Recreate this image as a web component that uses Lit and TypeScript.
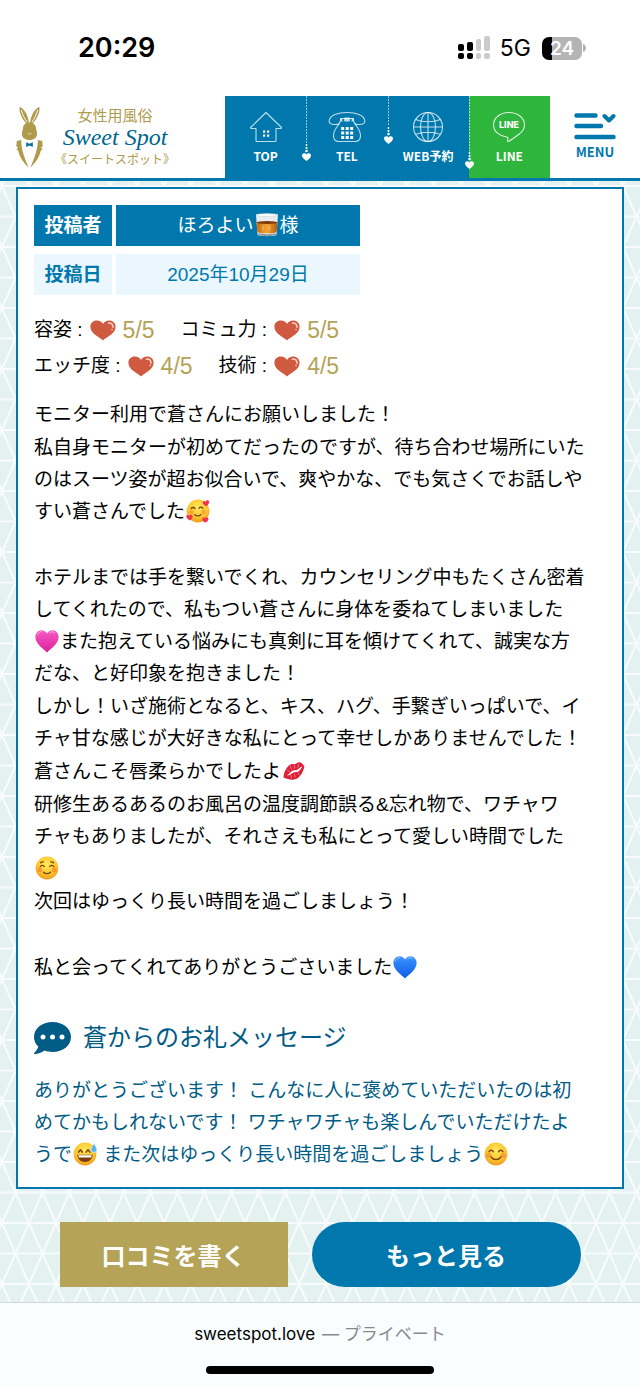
import { LitElement, html, css, svg } from "lit";
import { customElement, property } from "lit/decorators.js";

const face = svg`
  <defs>
    <radialGradient id="g" cx="50%" cy="35%" r="65%">
      <stop offset="0" stop-color="#ffe95c" /><stop offset="0.65" stop-color="#fdc62f" /><stop offset="1" stop-color="#f09a1c" />
    </radialGradient>
  </defs>
  <circle cx="12" cy="12" r="11.4" fill="url(#g)" />`;

const heartPath = "M12 23.500C8.500 19.500 .4 15 .4 8 .4 4 3.200 1.200 6.500 1.200 9 1.200 11 2.500 12 4.600 13 2.500 15 1.200 17.500 1.200c3.300 0 6.100 2.800 6.100 6.800 0 7-8.100 11.500-11.600 15.500z";

const heart = (light: string, dark: string) => svg`
  <defs>
    <linearGradient id="h" x1="0" y1="0" x2="0" y2="1">
      <stop offset="0" stop-color=${light} /><stop offset="1" stop-color=${dark} />
    </linearGradient>
  </defs>
  <path d=${heartPath} fill="url(#h)" />
  <path d="M2.500 6C3.200 3.500 5 2.600 6.800 2.600M14.500 3.800c1.500-1.300 3.500-1.400 5-.4" fill="none" stroke="#fff" stroke-opacity=".45" stroke-width="1" stroke-linecap="round" />`;

const EMOJI: Record<string, { label: string; art: unknown }> = {
  adore: {
    label: "🥰",
    art: svg`${face}
      <g fill="none" stroke="#7a4310" stroke-width="1.300" stroke-linecap="round">
        <path d="M5.200 9.600c.8-1.500 3-1.500 3.800 0M13 9.300c.8-1.500 3-1.500 3.800 0M8.800 15.800c1.500 1.500 4.500 1.500 6 0" />
      </g>
      <circle cx="5.500" cy="13" r="2.200" fill="#f7793c" opacity=".5" /><circle cx="17.500" cy="13" r="2.200" fill="#f7793c" opacity=".5" />
      <g fill="#ee3651">
        <path d="M20.500 7.200c-2.200-1-4-2.200-3.700-4 .3-1.500 2-1.600 2.800-.5.500-1.400 2.600-1.900 3.500-.6.900 1.600-.9 3.600-2.600 5.100z" />
        <path d="M4.300 21.500C2.300 20.600.1 19 .3 17.200c.3-1.600 2.200-1.600 2.900-.4.600-1.300 2.600-1.500 3.300-.2.700 1.700-.8 3.500-2.200 4.900z" />
        <path d="M19.700 23.600c-2.200-.7-3.900-2-3.500-3.900.4-1.400 2.100-1.500 2.800-.4.700-1.300 2.700-1.500 3.300-.1.600 1.600-1 3.300-2.600 4.400z" />
      </g>`,
  },
  relaxed: {
    label: "☺️",
    art: svg`${face}
      <g fill="none" stroke="#7a4310" stroke-width="1.300" stroke-linecap="round">
        <path d="M5.300 10.500c.8-1.600 3.200-1.600 4 0M14.700 10.500c.8-1.600 3.200-1.600 4 0M8.500 16.200c1.700 1.900 5.300 1.900 7 0M5.500 6.800c.8-.8 1.800-1.100 2.800-1M18.500 6.800c-.8-.8-1.800-1.100-2.800-1" />
      </g>
      <circle cx="4.800" cy="13.800" r="2.500" fill="#f4693a" opacity=".5" /><circle cx="19.200" cy="13.800" r="2.500" fill="#f4693a" opacity=".5" />`,
  },
  smile: {
    label: "😊",
    art: svg`${face}
      <g fill="none" stroke="#7a4310" stroke-width="1.400" stroke-linecap="round">
        <path d="M5 9.700c.9-2 3.500-2 4.400 0M14.600 9.700c.9-2 3.500-2 4.400 0M6.800 14.500c2.400 4.200 8 4.200 10.400 0" />
      </g>
      <circle cx="4.800" cy="13.300" r="2.500" fill="#f4693a" opacity=".45" /><circle cx="19.200" cy="13.300" r="2.500" fill="#f4693a" opacity=".45" />`,
  },
  sweat: {
    label: "😅",
    art: svg`${face}
      <g fill="none" stroke="#7a4310" stroke-width="1.400" stroke-linecap="round" stroke-linejoin="round">
        <path d="M5.500 10.300 7.500 7.700l2 2.600M13 10.300l2-2.600 2 2.600" />
      </g>
      <path d="M4.300 12.800h15.400c-.3 4.600-3.500 7.200-7.700 7.200s-7.400-2.600-7.700-7.200z" fill="#7a3d12" />
      <path d="M5.300 13.300h13.400l-.5 2.200H5.800z" fill="#fff" />
      <path d="M21 1.500c1 2 2.800 4 2.800 6a2.900 2.900 0 0 1-5.800 0c0-2 2-4 3-6z" fill="#54b4ee" stroke="#e6f6ff" stroke-width=".6" />`,
  },
  pink: { label: "🩷", art: heart("#f45cc4", "#dc1f9c") },
  blue: { label: "💙", art: heart("#3d94ff", "#0a5be8") },
  kiss: {
    label: "💋",
    art: svg`
      <path d="M1.500 18.500C1.700 13 4.500 7.500 9 5.200c1.600-.8 3 .2 4.300-.1C14.800 4.500 16.500 2.800 18.500 3.500c1.900.6 2.500 2.500 3.900 3.700-1 5.300-3.800 10.800-8.400 12.800-4 1.600-7.500.4-12.500-1.500z" fill="#dc2038" />
      <path d="M4.500 16.300c2.800-.7 4-3.800 6.500-4.800 1.700-.7 2.700.2 4.300-.8 2-1.200 3-2.800 5.200-3.200-1.400 1.900-2.500 4.200-4.600 5.200-1.500.7-3 .2-4.600 1-2.300 1.200-3.700 3-6.800 2.600z" fill="#fff" />
      <path d="M8.500 7.500l1 2.800M12.500 6.800l.2 2.500M16.500 5.500l-.6 2.800M9 16.500l.6 2.200M12.500 15.500l.7 2.500M16 13.800l1 1.800M5.500 11l1.500 1.700" stroke="#f7a6ad" stroke-width=".7" stroke-linecap="round" />`,
  },
  whisky: {
    label: "🥃",
    art: svg`
      <defs>
        <linearGradient id="w" x1="0" x2="1">
          <stop offset="0" stop-color="#c46a12" /><stop offset=".5" stop-color="#f3a431" /><stop offset="1" stop-color="#b65a0e" />
        </linearGradient>
      </defs>
      <path d="M1 1.500h22l-1.500 20c-.1 2.200-19 2.200-19 0z" fill="#e9edf0" />
      <path d="M1.500 9.500h21l-.9 9.500c-2 1.800-17.200 1.800-19.200 0z" fill="url(#w)" />
      <ellipse cx="12" cy="9.500" rx="10.500" ry="1.400" fill="#7b3a0c" />
      <ellipse cx="12" cy="2" rx="11" ry="1.400" fill="#fff" stroke="#c3cbd0" stroke-width=".5" />
      <path d="M3 20c3 1.500 15 1.500 18 0l-.3 1.800c-3 1.800-14.400 1.800-17.400 0z" fill="#8e9aa1" />
      <path d="M8 12.500v5M14.500 12.500v5" stroke="#ffd27a" stroke-width="1.500" opacity=".5" />`,
  },
};

@customElement("sweet-emoji")
class SweetEmoji extends LitElement {
  @property() name = "smile";
  static styles = css`
    :host { display: inline-block; width: 24px; height: 24px; margin: 0 1px; vertical-align: -5px; }
    svg { display: block; }
  `;
  render() {
    const e = EMOJI[this.name];
    return html`<svg width="24" height="24" viewBox="0 0 24 24" role="img" aria-label=${e.label}>${e.art}</svg>`;
  }
}

@customElement("status-bar")
class StatusBar extends LitElement {
  static styles = css`
    :host {
      display: flex; justify-content: space-between; align-items: center; box-sizing: border-box;
      height: 96px; padding: 0 54px 0 78px; background: #fff; color: #000;
      font-family: Inter, "Liberation Sans", sans-serif;
    }
    .time { font-size: 27px; font-weight: 600; line-height: 32px; }
    .right { display: flex; align-items: center; }
    .net { font-size: 23px; line-height: 28px; margin: 0 11px 0 10px; }
    .battery {
      width: 40px; height: 23px; border-radius: 7px; text-align: center; color: #fff;
      font-size: 19px; font-weight: 600; line-height: 23px;
      background: linear-gradient(to right, #000 24%, #b4b4b4 24%);
    }
    .cap { margin-left: 1px; }
  `;
  render() {
    return html`
      <div class="time">20:29</div>
      <div class="right">
        <svg width="32" height="24" viewBox="0 0 32 24" aria-label="電波">
          <g fill="#000">
            <rect y="8" width="6" height="7" rx="2" /><rect y="17" width="6" height="6" rx="2" />
            <rect x="9" y="6" width="6" height="9" rx="2" /><rect x="9" y="17" width="6" height="6" rx="2" />
          </g>
          <g fill="#cbcbcb">
            <rect x="18" y="3" width="5" height="12" rx="2" /><rect x="18" y="17" width="5" height="6" rx="2" />
            <rect x="26" y="0" width="6" height="15" rx="2" /><rect x="26" y="17" width="6" height="6" rx="2" />
          </g>
        </svg>
        <span class="net">5G</span>
        <span class="battery">24</span>
        <svg class="cap" width="3" height="8" viewBox="0 0 3 8"><path d="M0 0c4 1 4 7 0 8z" fill="#b4b4b4" /></svg>
      </div>`;
  }
}

@customElement("site-header")
class SiteHeader extends LitElement {
  static styles = css`
    :host {
      display: grid; grid-template-columns: 225px repeat(4, 1fr) 90px; height: 82px;
      background: #fff; border-bottom: 3px solid #0078ad;
      font-family: "Noto Sans CJK JP", sans-serif;
    }
    .logo { display: flex; align-items: center; padding-left: 16px; gap: 8px; text-decoration: none; color: #b09a4c; }
    .words { display: flex; flex-direction: column; align-items: center; width: 126px; white-space: nowrap; }
    .words span { line-height: 22px; }
    .kind { font-size: 15px; }
    .name { font-family: "Liberation Serif", serif; font-style: italic; font-size: 24px; color: #00658f; }
    .kana { font-size: 12px; }
    .item {
      position: relative; display: flex; flex-direction: column; align-items: center; gap: 4px;
      padding-top: 15px; background: #0078ad; color: #fff; text-decoration: none;
      font-size: 12px; font-weight: 700; line-height: 18px; white-space: nowrap;
    }
    .line { background: #2db53c; }
    .drop { position: absolute; top: 0; right: -6px; z-index: 1; }
    .menu {
      display: flex; flex-direction: column; align-items: center; gap: 3px; padding: 16px 0 0; border: 0;
      background: #fff; color: #0078ad; font: 700 13px/18px "Noto Sans CJK JP", sans-serif;
    }
    svg { display: block; }
  `;
  drop(len: number) {
    return html`<svg class="drop" width="10" height=${len + 10} viewBox="0 0 10 ${len + 10}" aria-hidden="true">
      <path d="M4.500 0V${len - 9}" stroke="#fff" stroke-opacity=".6" stroke-width="1" stroke-dasharray="2 1" />
      <g fill="#fff"><circle cx="4.500" cy=${len - 7} r=".9" /><circle cx="4.500" cy=${len - 4} r="1.100" /><circle cx="4.500" cy=${len - 1} r="1.300" />
      <path transform="translate(0 ${len + 1})" d="M4.500 8C2.500 6.300 0 4.700 0 2.400 0 0 3.300-.7 4.500 1.500 5.700-.7 9 0 9 2.400 9 4.700 6.500 6.300 4.500 8z" /></g>
    </svg>`;
  }
  render() {
    return html`
      <a class="logo" href="#">
        <svg width="28" height="62" viewBox="0 0 28 62" aria-hidden="true">
          <g fill="#b09a4c">
            <path d="M11.500 18.500C7 14.500 2.600 7 3.600 1 8.500 2.500 12.500 10 13 17.500zM15.500 18.500C20 14.500 24.400 7 23.400 1 18.500 2.500 14.500 10 14 17.500z" />
            <path d="M13.500 16.500c4.200 0 6.300 2.500 6.600 6 .1 1.800 1 3 1 5.200 0 3.800-3 6.300-7.600 6.300s-7.600-2.500-7.600-6.300c0-2.200.9-3.400 1-5.200.3-3.500 2.400-6 6.600-6z" />
            <path d="M5.200 34C5 43 9 53 12.600 61.500 7.500 57 3.500 51 2.200 44.500L.5 43.800 2 41.500.3 40.300 .8 35zM21.800 34C22 43 18 53 14.400 61.500c5.100-4.500 9.100-10.500 10.400-17l1.700-.7L25 41.500l1.700-1.200-.5-5.300z" />
          </g>
          <path d="M5.300 4c1.200 4.700 3.200 8.700 5.700 12M21.700 4c-1.200 4.700-3.200 8.700-5.700 12" stroke="#fff" stroke-width="1" fill="none" />
          <path d="M11.500 27.500q2 1.300 4 0" stroke="#efe6c4" stroke-width=".8" fill="none" />
          <path d="M10.200 36.300 13.500 37.800l3.300-1.500v4.700L13.500 39.500l-3.300 1.500z" fill="#00709f" />
        </svg>
        <span class="words">
          <span class="kind">女性用風俗</span><span class="name">Sweet Spot</span><span class="kana">《スイートスポット》</span>
        </span>
      </a>
      <a class="item" href="#top">
        <svg width="34" height="32" viewBox="0 0 34 32" fill="none" stroke="#fff" stroke-opacity=".75" stroke-width="1.100" stroke-linejoin="round">
          <path d="M17 1.500 1.500 16.500 2 17.500H7V29.500q0 1 1 1H26q1 0 1-1V17.500h5l.5-1z" />
          <g fill="#fff" stroke="none"><rect x="14" y="19.500" width="2.200" height="2.200" /><rect x="18" y="19.500" width="2.200" height="2.200" /><rect x="14" y="23.500" width="2.200" height="2.200" /><rect x="18" y="23.500" width="2.200" height="2.200" /></g>
        </svg>TOP${this.drop(56)}
      </a>
      <a class="item" href="#tel">
        <svg width="38" height="32" viewBox="0 0 38 32" fill="none" stroke="#fff" stroke-opacity=".75" stroke-width="1.100" stroke-linejoin="round">
          <path d="M12.500 7.500C13 11.500 11 14 6.500 13.500 2.500 13.500.8 12 1.200 9.500 2 4 10 1.500 19 1.500S36 4 36.800 9.500c.4 2.500-1.300 4-5.300 4-4.500.5-6.500-2-6-6zM12 11c-1 3.500-6.500 7-6.500 13.500 0 4.500 1.500 6 5 6h17c3.500 0 5-1.500 5-6C32.500 18 27 14.500 26 11" />
          <path d="M13.500 7.500v3M24.500 7.500v3M17 7.500h4v2h-4z" stroke-width="1.800" />
          <g fill="#fff" stroke="none">
            ${[16, 20.5, 25].map((y) => [13.2, 17.7, 22.2].map((x) => svg`<rect x=${x} y=${y} width="3" height="3" />`))}
          </g>
        </svg>TEL${this.drop(39)}
      </a>
      <a class="item" href="#reserve">
        <svg width="32" height="32" viewBox="0 0 32 32" fill="none" stroke="#fff" stroke-opacity=".75" stroke-width="1.100">
          <circle cx="16" cy="16" r="14.500" /><ellipse cx="16" cy="16" rx="7.500" ry="14.500" />
          <path d="M16 1.500v29M1.500 16h29M3.500 8.500c7 3 18 3 25 0M3.500 23.500c7-3 18-3 25 0" />
        </svg>WEB予約${this.drop(64)}
      </a>
      <a class="item line" href="#line">
        <svg width="34" height="32" viewBox="0 0 34 32" fill="none">
          <path d="M17 1.500c8.500 0 15.500 5.200 15.500 12.500 0 4-2.500 7-5.500 9.300-3.500 2.700-7 5-10 6.900-1 .6-1.600.2-1.400-.6.500-1.500.8-3.300-.8-3.600C7.500 25 1.500 20.500 1.500 14 1.500 6.700 8.500 1.500 17 1.500z" stroke="#fff" stroke-opacity=".85" stroke-width="1.100" />
          <text x="17" y="17" text-anchor="middle" fill="#fff" font-family="Inter, sans-serif" font-size="9" font-weight="800">LINE</text>
        </svg>LINE
      </a>
      <button class="menu" type="button">
        <svg width="42" height="28" viewBox="0 0 42 28" fill="none" stroke="#0078ad" stroke-linecap="round" stroke-linejoin="round">
          <path d="M2.500 3.500h19M2.500 14h24.500M2.500 25h37" stroke-width="4.500" /><path d="M30.500 4 35 8.500l4.500-4.500" stroke-width="4" />
        </svg>MENU
      </button>`;
  }
}

@customElement("review-card")
class ReviewCard extends LitElement {
  static styles = css`
    :host {
      display: block; border: 2px solid #0078ad; background: #fff; padding: 8px 16px 16px; color: #000;
      font-family: "Liberation Sans", "Noto Sans CJK JP", sans-serif; font-size: 19px; line-height: 32px;
    }
    table { border-spacing: 4px 8px; margin-left: -4px; }
    th, td { height: 41px; padding: 0; text-align: center; line-height: 28px; }
    th { width: 78px; font-weight: 700; }
    td { width: 244px; }
    .who { background: #0078ad; color: #fff; }
    .when { background: #ebf7ff; color: #0078ad; }
    .scores { display: grid; margin-top: 9px; }
    .row { display: flex; gap: 26px; height: 36px; }
    .score { display: flex; align-items: center; }
    .score svg { margin: 0 7px; }
    .num { color: #b5a357; font-size: 23px; }
    .text { display: grid; gap: 1px; max-width: 552px; margin-top: 15px; line-break: strict; }
    p { margin: 0; }
    .spaced { margin-top: 33px; }
    h2 {
      display: flex; align-items: center; gap: 12px; height: 34px; margin: 37px 0 20px;
      font-size: 24px; font-weight: 400; color: #005b85;
    }
    .thanks { max-width: 552px; color: #005b85; line-break: strict; }
  `;
  score(label: string, n: number) {
    return html`<div class="score"><span>${label} :</span>
      <svg width="26" height="21" viewBox="0 0 26 21" aria-hidden="true">
        <path d="M13 20.500C9 16.500.4 14 .4 6.800.4 3 3.200.6 6.800.6 9.600.6 12 1.800 13 4 14 1.800 16.400.6 19.200.6c3.600 0 6.400 2.400 6.400 6.200C25.600 14 17 16.500 13 20.500z" fill="#d05a40" />
        <path d="M18.500 3.200c2.500-.6 4.700 1.200 4.500 4" fill="none" stroke="#f6d5cc" stroke-width="1.500" stroke-linecap="round" /><circle cx="22" cy="9.500" r=".8" fill="#f6d5cc" />
      </svg><span class="num">${n}/5</span></div>`;
  }
  render() {
    const e = (n: string) => html`<sweet-emoji name=${n}></sweet-emoji>`;
    return html`
      <table>
        <tr class="who"><th scope="row">投稿者</th><td>ほろよい${e("whisky")}様</td></tr>
        <tr class="when"><th scope="row">投稿日</th><td>2025年10月29日</td></tr>
      </table>
      <div class="scores">
        <div class="row">${this.score("容姿", 5)}${this.score("コミュ力", 5)}</div>
        <div class="row">${this.score("エッチ度", 4)}${this.score("技術", 4)}</div>
      </div>
      <div class="text" lang="ja">
        <p>モニター利用で蒼さんにお願いしました！</p>
        <p>私自身モニターが初めてだったのですが、待ち合わせ場所にいたのはスーツ姿が超お似合いで、爽やかな、でも気さくでお話しやすい蒼さんでした${e("adore")}</p>
        <p class="spaced">ホテルまでは手を繋いでくれ、カウンセリング中もたくさん密着してくれたので、私もつい蒼さんに身体を委ねてしまいました${e("pink")}また抱えている悩みにも真剣に耳を傾けてくれて、誠実な方だな、と好印象を抱きました！</p>
        <p>しかし！いざ施術となると、キス、ハグ、手繋ぎいっぱいで、イチャ甘な感じが大好きな私にとって幸せしかありませんでした！</p>
        <p>蒼さんこそ唇柔らかでしたよ${e("kiss")}</p>
        <p>研修生あるあるのお風呂の温度調節誤る&amp;忘れ物で、ワチャワチャもありましたが、それさえも私にとって愛しい時間でした${e("relaxed")}</p>
        <p>次回はゆっくり長い時間を過ごしましょう！</p>
        <p class="spaced">私と会ってくれてありがとうごさいました${e("blue")}</p>
      </div>
      <h2>
        <svg width="37" height="32" viewBox="0 0 37 32" aria-hidden="true">
          <path d="M18.500 0C29 0 37 6.500 37 15s-8 15-18.500 15c-3 0-5.500-.4-8-1.400C7.500 30.800 4 32 .6 32c-.8 0-.8-.7-.2-1.200 2-2 3.500-4.500 3.900-6.300C1.500 22 0 18.700 0 15 0 6.500 8 0 18.500 0z" fill="#005b85" />
          <g fill="#fff"><circle cx="9" cy="15" r="2.500" /><circle cx="18.500" cy="15" r="2.500" /><circle cx="28" cy="15" r="2.500" /></g>
        </svg>蒼からのお礼メッセージ
      </h2>
      <p class="thanks" lang="ja">ありがとうございます！ こんなに人に褒めていただいたのは初めてかもしれないです！ ワチャワチャも楽しんでいただけたようで${e("sweat")} また次はゆっくり長い時間を過ごしましょう${e("smile")}</p>`;
  }
}

@customElement("app-root")
class AppRoot extends LitElement {
  static styles = css`
    :host { display: block; font-family: "Liberation Sans", "Noto Sans CJK JP", sans-serif; }
    main {
      padding: 6px 16px 15px;
      background: #e4f1f1 url("data:image/svg+xml,%3Csvg xmlns='http://www.w3.org/2000/svg' width='27' height='61'%3E%3Cpath d='M-1 -2.260 28 63.260M28 -2.260 -1 63.260M0 0H27M0 30.500H27M0 61H27' fill='none' stroke='%23fff' stroke-opacity='.75' stroke-width='2'/%3E%3C/svg%3E") 2px 5px;
    }
    .actions { display: flex; justify-content: center; gap: 24px; margin-top: 33px; }
    .btn {
      height: 65px; border: 0; padding: 0; color: #fff;
      font: 700 24px/36px "Noto Sans CJK JP", sans-serif;
    }
    .write { width: 228px; background: #b5a357; }
    .more { width: 269px; background: #0078ad; border-radius: 33px; }
    footer {
      display: flex; flex-direction: column; align-items: center; box-sizing: border-box; height: 85px;
      border-top: 1px solid #cfd9db; background: #fafdfe; padding-top: 19px;
    }
    .address { display: flex; gap: 7px; font: 17px/24px Inter, "Noto Sans CJK JP", sans-serif; color: #000; }
    .mode { color: #88898c; }
    .home { width: 228px; height: 8px; border-radius: 4px; background: #000; margin-top: 20px; }
  `;
  render() {
    return html`
      <status-bar></status-bar>
      <site-header></site-header>
      <main>
        <review-card></review-card>
        <div class="actions">
          <button class="btn write" type="button">口コミを書く</button>
          <button class="btn more" type="button">もっと見る</button>
        </div>
      </main>
      <footer>
        <div class="address"><span>sweetspot.love</span><span class="mode">— プライベート</span></div>
        <div class="home"></div>
      </footer>`;
  }
}
